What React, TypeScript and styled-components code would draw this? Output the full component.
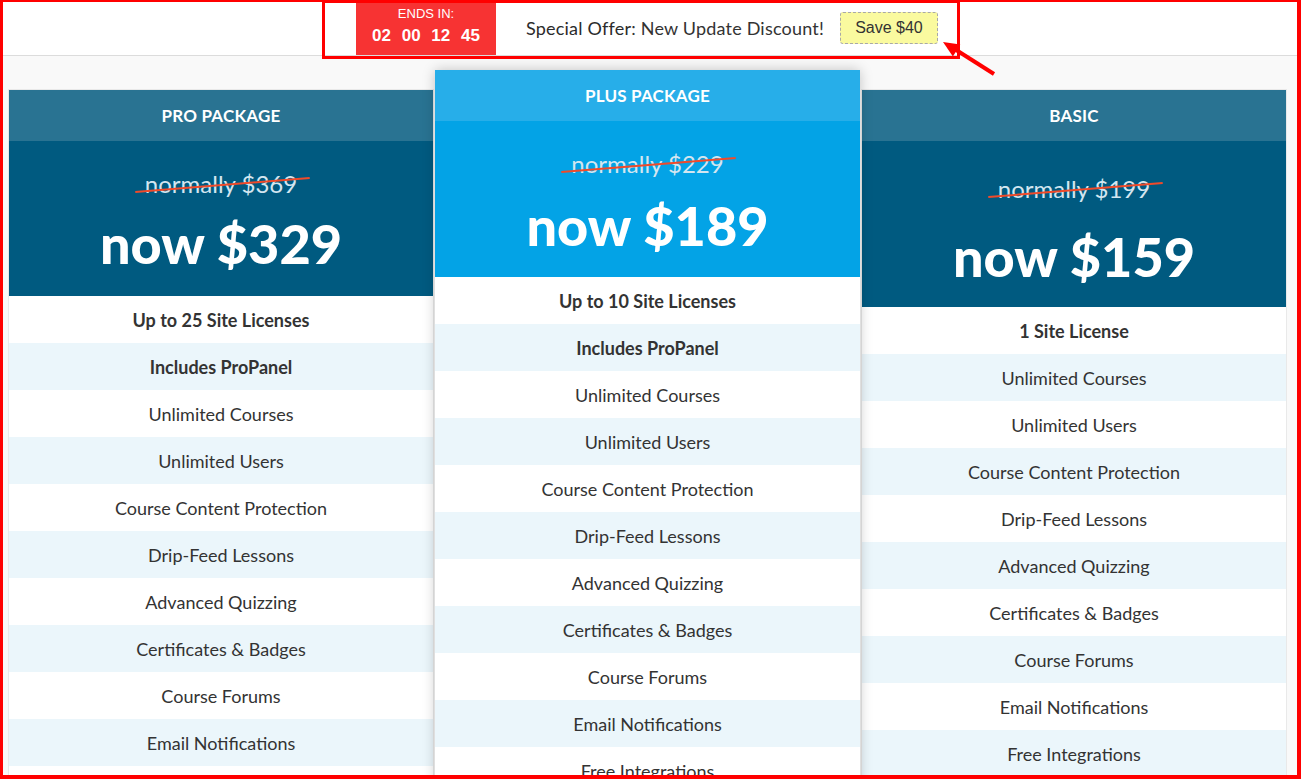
import React from "react";
import styled, { createGlobalStyle } from "styled-components";

const GlobalStyle = createGlobalStyle`
  html, body { margin: 0; padding: 0; }
  body {
    background: #f9f9f9;
    overflow: hidden;
    font-family: "Lato", "Noto Sans", sans-serif;
  }
  * { box-sizing: border-box; }
`;

const Page = styled.div`
  position: relative;
  width: 1301px;
  height: 779px;
  overflow: hidden;
  background: #f9f9f9;
`;

const Header = styled.header`
  height: 56px;
  background: #fff;
  border-bottom: 1px solid #dcdcdc;
  display: flex;
  align-items: center;
  padding-left: 356px;
`;

const Countdown = styled.div`
  width: 140px;
  height: 55px;
  background: #f73333;
  color: #fff;
  font-family: "Liberation Sans", Arial, sans-serif;
  display: flex;
  flex-direction: column;
  align-items: center;
  justify-content: center;
  gap: 5px;
  padding-bottom: 2px;
`;

const EndsLabel = styled.div`
  font-size: 13px;
  line-height: 14px;
`;

const Digits = styled.div`
  font-size: 17px;
  font-weight: 700;
  line-height: 20px;
  word-spacing: 6px;
`;

const OfferText = styled.div`
  margin-left: 30px;
  font-family: "Lato", sans-serif;
  font-size: 18px;
  letter-spacing: 0.2px;
  color: #333;
`;

const OfferLead = styled.span`
  color: #2b2b2b;
`;

const SaveButton = styled.div`
  margin-left: 16px;
  width: 98px;
  height: 32px;
  margin-top: 1px;
  background: #fafa9f;
  border: 1px dashed #a8a8a8;
  border-radius: 3px;
  display: flex;
  align-items: center;
  justify-content: center;
  font-family: "Liberation Sans", Arial, sans-serif;
  font-size: 16px;
  color: #333;
`;

const Columns = styled.main`
  display: grid;
  grid-template-columns: 424px 425px 424px;
  column-gap: 2px;
  padding-left: 9px;
  padding-top: 14px;
  align-items: start;
`;

const Column = styled.section<{ $featured?: boolean }>`
  position: relative;
  margin-top: ${(p) => (p.$featured ? "0" : "20px")};
  z-index: ${(p) => (p.$featured ? 2 : 1)};
  background: #fff;
  box-shadow: ${(p) =>
    p.$featured
      ? "0 0 12px rgba(0,0,0,0.22)"
      : "0 0 0 1px #e9e9e9"};
`;

const Title = styled.div<{ $featured?: boolean }>`
  height: 51px;
  display: flex;
  align-items: center;
  justify-content: center;
  background: ${(p) => (p.$featured ? "#27aee9" : "#297392")};
  color: #fff;
  font-weight: 700;
  font-size: 17px;
  letter-spacing: 0.2px;
`;

const PriceBlock = styled.div<{ $featured?: boolean; $pt: number; $gap: number; $pb: number }>`
  background: ${(p) => (p.$featured ? "#03a3e6" : "#005a80")};
  display: flex;
  flex-direction: column;
  align-items: center;
  padding-top: ${(p) => p.$pt}px;
  padding-bottom: ${(p) => p.$pb}px;
  gap: ${(p) => p.$gap}px;
`;

const Was = styled.div`
  position: relative;
  font-size: 24px;
  line-height: 30px;
  color: #d3e6f0;
  &::after {
    content: "";
    position: absolute;
    left: -10px;
    right: -13px;
    top: 15px;
    height: 2px;
    background: #f04a2a;
    transform: rotate(-4.6deg);
  }
`;

const Now = styled.div`
  font-size: 54px;
  line-height: 60px;
  font-weight: 900;
  color: #fff;
`;

const Feature = styled.div<{ $alt: boolean; $bold?: boolean }>`
  height: 47px;
  display: flex;
  align-items: center;
  justify-content: center;
  background: ${(p) => (p.$alt ? "#ebf6fb" : "#fff")};
  color: #333;
  font-size: 18px;
  font-weight: ${(p) => (p.$bold ? 700 : 400)};
`;

const Frame = styled.div`
  position: absolute;
  inset: 0;
  border-style: solid;
  border-color: #ff0000;
  border-width: 2px 4px 4px 3px;
  pointer-events: none;
  z-index: 10;
`;

const Highlight = styled.div`
  position: absolute;
  left: 322px;
  top: 0;
  width: 638px;
  height: 59px;
  border: 3px solid #ff0000;
  pointer-events: none;
  z-index: 10;
`;

const Arrow = styled.svg`
  position: absolute;
  left: 0;
  top: 0;
  pointer-events: none;
  z-index: 10;
`;

type Plan = {
  title: string;
  was: string;
  now: string;
  featured?: boolean;
  pt: number;
  gap: number;
  pb: number;
  rows: string[];
  boldCount: number;
};

const common = [
  "Unlimited Courses",
  "Unlimited Users",
  "Course Content Protection",
  "Drip-Feed Lessons",
  "Advanced Quizzing",
  "Certificates & Badges",
  "Course Forums",
  "Email Notifications",
  "Free Integrations",
];

const plans: Plan[] = [
  {
    title: "PRO PACKAGE",
    was: "normally $369",
    now: "now $329",
    pt: 28,
    gap: 15,
    pb: 22,
    rows: ["Up to 25 Site Licenses", "Includes ProPanel", ...common],
    boldCount: 2,
  },
  {
    title: "PLUS PACKAGE",
    was: "normally $229",
    now: "now $189",
    featured: true,
    pt: 28,
    gap: 17,
    pb: 21,
    rows: ["Up to 10 Site Licenses", "Includes ProPanel", ...common],
    boldCount: 2,
  },
  {
    title: "BASIC",
    was: "normally $199",
    now: "now $159",
    pt: 33,
    gap: 23,
    pb: 20,
    rows: ["1 Site License", ...common],
    boldCount: 1,
  },
];

export default function App() {
  return (
    <>
      <GlobalStyle />
      <Page>
        <Header>
          <Countdown>
            <EndsLabel>ENDS IN:</EndsLabel>
            <Digits>02 00 12 45</Digits>
          </Countdown>
          <OfferText>
            <OfferLead>Special Offer</OfferLead>: New Update Discount!
          </OfferText>
          <SaveButton>Save $40</SaveButton>
        </Header>
        <Columns>
          {plans.map((p) => (
            <Column key={p.title} $featured={p.featured}>
              <Title $featured={p.featured}>{p.title}</Title>
              <PriceBlock $featured={p.featured} $pt={p.pt} $gap={p.gap} $pb={p.pb}>
                <Was>{p.was}</Was>
                <Now>{p.now}</Now>
              </PriceBlock>
              {p.rows.map((r, i) => (
                <Feature key={r} $alt={i % 2 === 1} $bold={i < p.boldCount}>
                  {r}
                </Feature>
              ))}
            </Column>
          ))}
        </Columns>
        <Highlight />
        <Arrow width="1301" height="100" viewBox="0 0 1301 100">
          <line x1="994" y1="74" x2="953" y2="48" stroke="#ff0000" strokeWidth="4" />
          <polygon points="943,42 960.3,44.5 952.9,56.5" fill="#ff0000" />
        </Arrow>
        <Frame />
      </Page>
    </>
  );
}
